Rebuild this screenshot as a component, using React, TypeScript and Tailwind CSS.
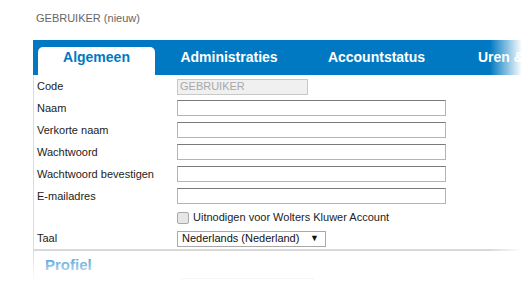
import React from 'react';

const fields = [
    { label: 'Naam', h: 'h-[22px]' },
    { label: 'Verkorte naam', h: 'h-[22px]' },
    { label: 'Wachtwoord', h: 'h-[22px]' },
    { label: 'Wachtwoord bevestigen', h: 'h-[22px]' },
    { label: 'E-mailadres', h: 'h-[22px]' },
];

const tabs = [
    { label: 'Administraties', w: 'w-[148px]' },
    { label: 'Accountstatus', w: 'w-[147px]' },
];

const Field: React.FC<{ label: string; h: string; children: React.ReactNode }> = ({ label, h, children }) => (
    <div className={`flex items-center ${h}`}>
        <div className="w-[140px] shrink-0 text-[11px] text-[#222]">{label}</div>
        {children}
    </div>
);

export default function App() {
    return (
        <div className="relative w-[530px] h-[284px] overflow-hidden bg-white font-['Liberation_Sans',Arial,sans-serif]">
            {/* title */}
            <div className="h-[40px] pl-[36px] pt-[12px] text-[11px] leading-[13px] text-[#666]">GEBRUIKER (nieuw)</div>

            <div className="ml-[33px]">
                {/* tab bar */}
                <div className="flex h-[35px] items-end overflow-hidden bg-[#0079c2] whitespace-nowrap">
                    <div className="ml-[5px] h-[28px] w-[117px] shrink-0 rounded-t-[5px] bg-white pt-[2px] text-center text-[14px] font-bold leading-[16px] text-[#0079c2]">
                        Algemeen
                    </div>
                    {tabs.map((t) => (
                        <div key={t.label} className={`h-[28px] ${t.w} shrink-0 pt-[2px] text-center text-[14px] font-bold leading-[16px] text-white`}>
                            {t.label}
                        </div>
                    ))}
                    <div className="h-[28px] shrink-0 pl-[28px] pt-[2px] text-[14px] font-bold leading-[16px] text-white">Uren &amp; Onkosten</div>
                </div>

                {/* form */}
                <div className="border-l border-[#dcdcdc] pl-[3px]">
                    <Field label="Code" h="h-[22px] pt-[1px]">
                        <div className="flex h-[16px] w-[131px] items-center border border-[#c8c8c8] bg-[#f0f0f0] pl-[2px] text-[11px] text-[#a8a8a8]">
                            GEBRUIKER
                        </div>
                    </Field>
                    {fields.map((f) => (
                        <Field key={f.label} label={f.label} h={f.h}>
                            <div className="h-[16px] w-[269px] border border-[#b4b4b4] border-t-[#7a7a7a] bg-white" />
                        </Field>
                    ))}
                    <Field label="" h="h-[21px]">
                        <div className="flex items-center gap-[4px]">
                            <div className="h-[12px] w-[12px] rounded-[2px] border border-[#a9a9a9] bg-[#e6e6e6]" />
                            <span className="text-[11px] text-[#222]">Uitnodigen voor Wolters Kluwer Account</span>
                        </div>
                    </Field>
                    <Field label="Taal" h="h-[21px]">
                        <div className="flex h-[16px] w-[149px] items-center justify-between border border-[#a9a9a9] pl-[4px] pr-[6px] text-[11px] text-[#111]">
                            <span>Nederlands (Nederland)</span>
                            <span className="text-[9px]">▼</span>
                        </div>
                    </Field>

                    <div className="h-[2px] bg-[#d9d9d9] -ml-[4px]" />

                    <div className="pl-[8px] pt-[5px] text-[15px] font-bold leading-[18px] text-[#2a8ed0]">Profiel</div>
                    <Field label="" h="h-[22px] pt-[2px]">
                        <div className="ml-[4px] h-[16px] w-[133px] border border-[#b4b4b4]" />
                    </Field>
                </div>
            </div>

            {/* fade overlays */}
            <div className="absolute left-[490px] right-0 top-0 bottom-0 bg-[linear-gradient(to_right,rgba(255,255,255,0),white_80%)]" />
            <div className="absolute left-0 right-0 top-[252px] bottom-0 bg-[linear-gradient(to_bottom,rgba(255,255,255,0),white_95%)]" />
        </div>
    );
}
